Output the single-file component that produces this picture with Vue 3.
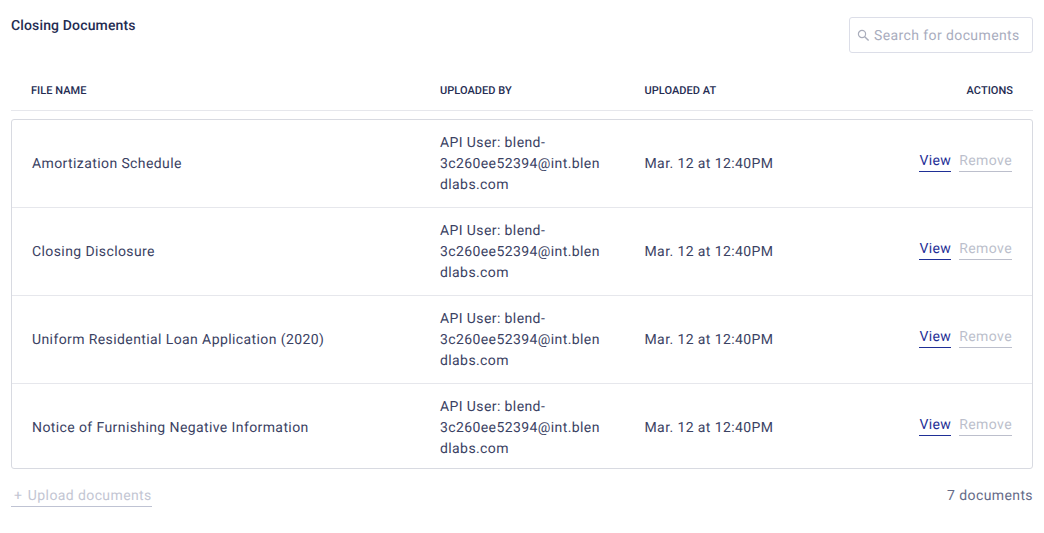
<script setup>
const rows = [
  'Amortization Schedule',
  'Closing Disclosure',
  'Uniform Residential Loan Application (2020)',
  'Notice of Furnishing Negative Information'
]
</script>

<template>
  <div class="page">
    <div class="head">
      <h1 class="title">Closing Documents</h1>
      <label class="search">
        <svg class="search-icon" width="13" height="13" viewBox="0 0 13 13" fill="none">
          <circle cx="5" cy="5" r="3.6" stroke="#a9adbb" stroke-width="1.2" />
          <path d="M7.7 7.7L11.6 11.6" stroke="#a9adbb" stroke-width="1.4" />
        </svg>
        <span>Search for documents</span>
      </label>
    </div>
    <div class="columns">
      <div class="c1">FILE NAME</div>
      <div class="c2">UPLOADED BY</div>
      <div class="c3">UPLOADED AT</div>
      <div class="c4">ACTIONS</div>
    </div>
    <div class="table">
      <div class="rows">
        <div v-for="name in rows" :key="name" class="row">
          <div class="c1">{{ name }}</div>
          <div class="c2 by">API User: blend-3c260ee52394@int.blendlabs.com</div>
          <div class="c3">Mar. 12 at 12:40PM</div>
          <div class="c4 actions">
            <a class="view">View</a>
            <a class="remove">Remove</a>
          </div>
        </div>
      </div>
    </div>
    <div class="foot">
      <a class="upload"><span class="plus">+</span>Upload documents</a>
      <span class="count">7 documents</span>
    </div>
  </div>
</template>

<style scoped>
.page {
  box-sizing: border-box;
  width: 1044px;
  height: 533px;
  padding: 16px 11px 0;
  font-family: Roboto, sans-serif;
  text-rendering: geometricPrecision;
  color: #3b4263;
  font-size: 14px;
  letter-spacing: 0.4px;
  background: #fff;
}
.head {
  display: flex;
  justify-content: space-between;
  align-items: flex-start;
  height: 54px;
}
.title {
  margin: 0;
  font-size: 14px;
  font-weight: 500;
  line-height: 20px;
  letter-spacing: 0.15px;
  color: #252c52;
}
.search {
  box-sizing: border-box;
  width: 184px;
  height: 36px;
  margin-top: 1px;
  padding-top: 1px;
  border: 1px solid #dcdee8;
  border-radius: 3px;
  display: flex;
  align-items: center;
  gap: 4px;
  padding-left: 7px;
  color: #a9adbe;
}
.columns {
  display: flex;
  align-items: center;
  height: 41px;
  padding-top: 1px;
  border-bottom: 1px solid #e6e7ec;
  font-size: 11px;
  font-weight: 500;
  color: #252c52;
  letter-spacing: 0.05px;
  box-sizing: border-box;
}
.c1 { width: 429px; padding-left: 20px; box-sizing: border-box; }
.c2 { width: 204.5px; box-sizing: border-box; }
.c3 { flex: 1; }
.c4 { width: 120px; padding-right: 20px; text-align: right; box-sizing: border-box; }
.table {
  margin-top: 8px;
  border: 1px solid #d8dae1;
  border-radius: 3px;
  height: 350px;
  box-sizing: border-box;
}
.row {
  display: flex;
  align-items: center;
  height: 88px;
  padding-top: 1px;
  border-bottom: 1px solid #e6e7ec;
  box-sizing: border-box;
  line-height: 21px;
}
.row:last-child { border-bottom: 0; }
.row .c1 { padding-left: 20px; width: 428px; }
.by { width: 165px; margin-right: 39.5px; overflow-wrap: anywhere; }
.actions {
  display: flex;
  justify-content: flex-end;
  gap: 8px;
  margin-top: -2px;
}
.view, .remove {
  line-height: 19px;
  border-bottom: 1px solid currentColor;
  margin-top: -3px;
}
.view { color: #1f2f96; }
.remove { color: #bcbfcc; }
.foot {
  display: flex;
  justify-content: space-between;
  align-items: center;
  margin-top: 16px;
}
.upload {
  color: #c3c6d3;
  border-bottom: 1px solid #bfc3d3;
  line-height: 19px;
  padding-top: 2px;
}
.plus { margin-right: 5.5px; padding-left: 3px; }
.count { color: #666c88; }
</style>
